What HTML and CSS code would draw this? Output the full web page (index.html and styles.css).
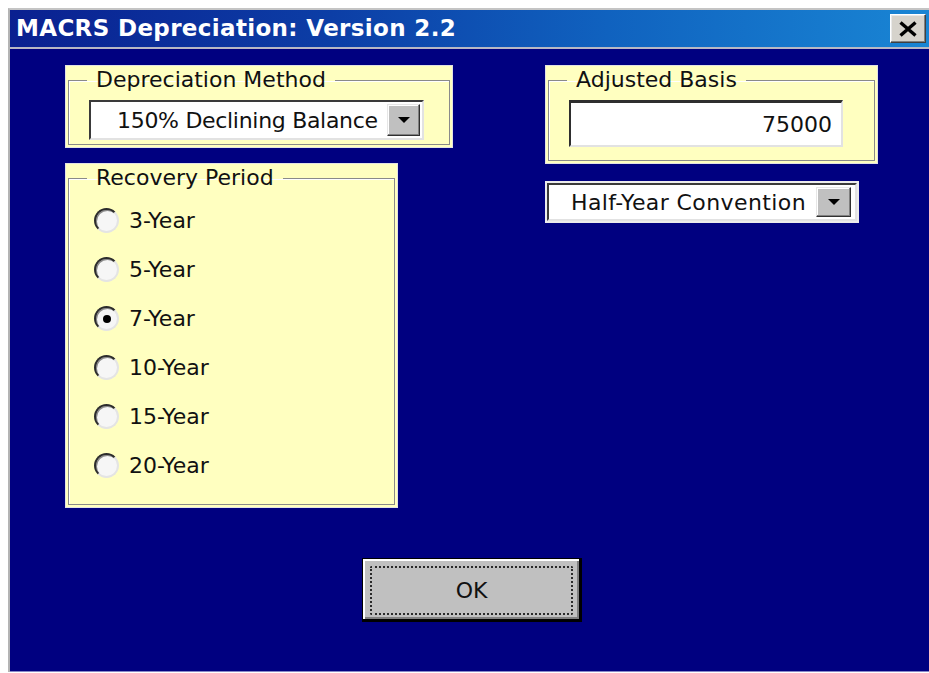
FILE: index.html
```html
<!DOCTYPE html>
<html lang="en">
<head>
<meta charset="utf-8">
<title>MACRS Depreciation</title>
<link rel="stylesheet" href="styles.css">
</head>
<body>
<div class="window">
  <div class="titlebar">
    <span class="title">MACRS Depreciation: Version 2.2</span>
    <button class="close" type="button" aria-label="Close">
      <svg width="20" height="16" viewBox="0 0 20 16"><path d="M2.5 1.5 L17.5 14.5 M17.5 1.5 L2.5 14.5" stroke="#000" stroke-width="3.4" fill="none"/></svg>
    </button>
  </div>
  <div class="client">
    <div class="top">
      <div class="col-left">
        <div class="group group-method">
          <fieldset>
            <legend>Depreciation Method</legend>
            <div class="fs-body method-body">
              <div class="combo combo-method">
                <span class="combo-text">150% Declining Balance</span>
                <span class="drop"><svg width="12" height="6" viewBox="0 0 12 6"><polygon points="0,0 12,0 6,6" fill="#000"/></svg></span>
              </div>
            </div>
          </fieldset>
        </div>
        <div class="group group-period">
          <fieldset>
            <legend>Recovery Period</legend>
            <div class="fs-body period-body">
              <div class="radio-row"><span class="radio"></span><span>3-Year</span></div>
              <div class="radio-row"><span class="radio"></span><span>5-Year</span></div>
              <div class="radio-row"><span class="radio checked"></span><span>7-Year</span></div>
              <div class="radio-row"><span class="radio"></span><span>10-Year</span></div>
              <div class="radio-row"><span class="radio"></span><span>15-Year</span></div>
              <div class="radio-row"><span class="radio"></span><span>20-Year</span></div>
            </div>
          </fieldset>
        </div>
      </div>
      <div class="col-right">
        <div class="group group-basis">
          <fieldset>
            <legend>Adjusted Basis</legend>
            <div class="fs-body basis-body">
              <div class="textbox">75000</div>
            </div>
          </fieldset>
        </div>
        <div class="combo combo-convention">
          <span class="combo-text">Half-Year Convention</span>
          <span class="drop"><svg width="12" height="6" viewBox="0 0 12 6"><polygon points="0,0 12,0 6,6" fill="#000"/></svg></span>
        </div>
      </div>
    </div>
    <button class="ok" type="button"><span class="ok-focus">OK</span></button>
  </div>
</div>
</body>
</html>
```
FILE: styles.css
```css
html, body {
  margin: 0;
  padding: 0;
  background: #ffffff;
  overflow: hidden;
}

body {
  font-family: "DejaVu Sans", Verdana, sans-serif;
  font-size: 22px;
  color: #111;
}

.window {
  margin: 8px 0 0 8px;
  border-top: 2px solid #c4c4c4;
  border-left: 2px solid #b4b4b4;
  width: 921px;
  box-sizing: border-box;
}

/* caption bar */
.titlebar {
  height: 37px;
  display: flex;
  align-items: center;
  justify-content: space-between;
  padding-left: 6px;
  padding-right: 3px;
  background: linear-gradient(to right, #0a2090 0%, #0c3ea6 35%, #1062bf 65%, #1985d4 100%);
  border-bottom: 2px solid #b8b8c4;
}

.title {
  color: #fff;
  font-weight: bold;
  font-size: 23px;
  line-height: 37px;
  letter-spacing: 0.35px;
}

.close {
  width: 36px;
  height: 29px;
  padding: 0;
  display: flex;
  align-items: center;
  justify-content: center;
  background: #d6d3cc;
  border: 1px solid;
  border-color: #ffffff #404040 #404040 #ffffff;
  box-shadow: inset -1px -1px 0 #808080, inset 1px 1px 0 #e8e8e8;
}

/* dialog client area */
.client {
  background: #000080;
  height: 623px;
  border-bottom: 1px solid #8888c8;
  padding: 16px 0 0 55px;
  box-sizing: border-box;
}

.top {
  display: flex;
  align-items: flex-start;
}

.col-left {
  width: 388px;
  display: flex;
  flex-direction: column;
  align-items: flex-start;
  gap: 15px;
}

.col-right {
  margin-left: 92px;
  display: flex;
  flex-direction: column;
  align-items: flex-start;
  gap: 17px;
}

/* group boxes */
.group {
  background: #ffffc0;
  border: 1px solid #e2e2e2;
  padding: 2px;
  box-sizing: border-box;
}

.group fieldset {
  margin: 0;
  padding: 0;
  min-width: 0;
  height: 100%;
  box-sizing: border-box;
  border: 1px solid #8a8a8a;
  box-shadow: inset 1px 1px 0 #ffffff;
}

.group legend {
  margin-left: 18px;
  padding: 0 9px;
  line-height: 24px;
  height: 24px;
}

.group-method { width: 388px; height: 83px; }
.group-period { width: 333px; height: 345px; }
.group-basis  { width: 333px; height: 99px; }

.method-body { padding: 8px 0 0 20px; }
.basis-body  { padding: 8px 0 0 20px; }
.period-body { padding: 6px 0 0 25px; }

/* combo boxes */
.combo {
  display: flex;
  align-items: center;
  background: #fff;
  border: 2px solid;
  border-color: #3a3a3a #e2e2e2 #e2e2e2 #3a3a3a;
  box-sizing: border-box;
  padding: 2px;
}

.combo-text {
  flex: 1;
  white-space: nowrap;
}

.combo-method {
  width: 335px;
  height: 40px;
}

.combo-method .combo-text {
  padding-left: 24px;
  letter-spacing: -0.3px;
}

.combo-convention {
  width: 310px;
  height: 38px;
  margin: 2px;
  box-shadow: 0 0 0 2px #ececec;
}

.combo-convention .combo-text {
  padding-left: 20px;
  letter-spacing: 0.4px;
}

.drop {
  width: 33px;
  height: 32px;
  box-sizing: border-box;
  display: flex;
  align-items: center;
  justify-content: center;
  background: #c0c0c0;
  border: 1px solid;
  border-color: #e6e6e6 #303030 #303030 #e6e6e6;
  box-shadow: inset -1px -1px 0 #808080, inset 1px 1px 0 #ffffff;
}

.combo-convention .drop {
  width: 35px;
  height: 30px;
  margin-right: 2px;
}

/* text box */
.textbox {
  width: 274px;
  height: 47px;
  box-sizing: border-box;
  background: #fff;
  border: 2px solid;
  border-color: #2e2e2e #e2e2e2 #e2e2e2 #2e2e2e;
  border-top-width: 3px;
  display: flex;
  align-items: center;
  justify-content: flex-end;
  padding-right: 9px;
}

/* radio buttons */
.radio-row {
  height: 49px;
  display: flex;
  align-items: center;
  gap: 10px;
}

.radio {
  width: 25px;
  height: 25px;
  box-sizing: border-box;
  border-radius: 50%;
  border: 2px solid;
  border-color: #2c2c2c #e4e4e4 #e4e4e4 #2c2c2c;
  background: #f6f6f6;
  box-shadow: inset 1px 1px 0 #8a8a8a;
  display: flex;
  align-items: center;
  justify-content: center;
}

.radio.checked::after {
  content: "";
  width: 8px;
  height: 8px;
  border-radius: 50%;
  background: #000;
}

/* default push button */
.ok {
  margin: 50px 0 0 297px;
  width: 220px;
  height: 64px;
  box-sizing: border-box;
  padding: 7px 6px 4px 7px;
  background: #c0c0c0;
  border-style: solid;
  border-color: #000;
  border-width: 1px 3px 3px 1px;
  box-shadow: inset 2px 2px 0 #ffffff, inset -2px -2px 0 #808080;
  font-family: "DejaVu Sans", Verdana, sans-serif;
  font-size: 22px;
  color: #111;
  display: block;
}

.ok-focus {
  display: flex;
  align-items: center;
  justify-content: center;
  height: 100%;
  box-sizing: border-box;
  border: 2px dotted #2a2a2a;
  border-radius: 2px;
}
```
